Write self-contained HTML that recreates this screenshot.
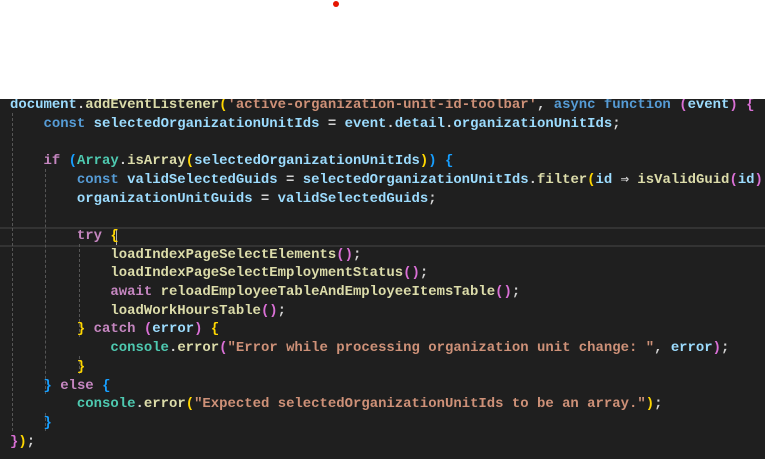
<!DOCTYPE html>
<html><head><style>
body{margin:0;width:765px;height:459px;background:#fff;overflow:hidden;position:relative}
.dot{position:absolute;left:333px;top:1px;width:6px;height:6px;border-radius:50%;background:#e51400}
.ed{position:absolute;left:0;top:99px;width:765px;height:360px;background:#1f1f1f;overflow:hidden}
pre{margin:0;position:absolute;left:10px;top:-3px;font-family:"Liberation Mono",monospace;font-size:13.95px;line-height:18.7px;font-weight:bold;color:#9cdcfe;white-space:pre}
.cur{position:absolute;left:0;top:128px;width:765px;height:16px;border-top:2px solid #333;border-bottom:2px solid #333}
.g{position:absolute;width:0;border-left:1px dashed #555}
.c{position:absolute;left:116px;top:130px;width:1px;height:16px;background:#aeafad}
.k{color:#569cd6}.p{color:#c586c0}.f{color:#dcdcaa}.s{color:#ce9178}.t{color:#4ec9b0}.o{color:#d4d4d4}
.b1{color:#ffd700}.b2{color:#da70d6}.b3{color:#179fff}
</style></head><body>
<div class="dot"></div>
<div class="ed">
<div class="cur"></div>
<div class="g" style="left:12px;top:14px;height:318px"></div>
<div class="g" style="left:45px;top:70px;height:225px"></div>
<div class="g" style="left:45px;top:314px;height:18px"></div>
<div class="g" style="left:79px;top:145px;height:93px"></div>
<div class="g" style="left:79px;top:257px;height:18px"></div>
<div class="c"></div>
<pre><span>document</span><span class="o">.</span><span class="f">addEventListener</span><span class="b1">(</span><span class="s">'active-organization-unit-id-toolbar'</span><span class="o">, </span><span class="k">async function</span> <span class="b2">(</span>event<span class="b2">)</span> <span class="b2">{</span>
    <span class="k">const</span> selectedOrganizationUnitIds <span class="o">=</span> event<span class="o">.</span>detail<span class="o">.</span>organizationUnitIds<span class="o">;</span>

    <span class="p">if</span> <span class="b3">(</span><span class="t">Array</span><span class="o">.</span><span class="f">isArray</span><span class="b1">(</span>selectedOrganizationUnitIds<span class="b1">)</span><span class="b3">)</span> <span class="b3">{</span>
        <span class="k">const</span> validSelectedGuids <span class="o">=</span> selectedOrganizationUnitIds<span class="o">.</span><span class="f">filter</span><span class="b1">(</span>id <span class="o">⇒</span> <span class="f">isValidGuid</span><span class="b2">(</span>id<span class="b2">)</span><span class="b1">)</span><span class="o">;</span>
        organizationUnitGuids <span class="o">=</span> validSelectedGuids<span class="o">;</span>

        <span class="p">try</span> <span class="b1">{</span>
            <span class="f">loadIndexPageSelectElements</span><span class="b2">()</span><span class="o">;</span>
            <span class="f">loadIndexPageSelectEmploymentStatus</span><span class="b2">()</span><span class="o">;</span>
            <span class="p">await</span> <span class="f">reloadEmployeeTableAndEmployeeItemsTable</span><span class="b2">()</span><span class="o">;</span>
            <span class="f">loadWorkHoursTable</span><span class="b2">()</span><span class="o">;</span>
        <span class="b1">}</span> <span class="p">catch</span> <span class="b2">(</span>error<span class="b2">)</span> <span class="b1">{</span>
            <span class="t">console</span><span class="o">.</span><span class="f">error</span><span class="b2">(</span><span class="s">"Error while processing organization unit change: "</span><span class="o">, </span>error<span class="b2">)</span><span class="o">;</span>
        <span class="b1">}</span>
    <span class="b3">}</span> <span class="p">else</span> <span class="b3">{</span>
        <span class="t">console</span><span class="o">.</span><span class="f">error</span><span class="b1">(</span><span class="s">"Expected selectedOrganizationUnitIds to be an array."</span><span class="b1">)</span><span class="o">;</span>
    <span class="b3">}</span>
<span class="b2">}</span><span class="b1">)</span><span class="o">;</span></pre>
</div>
</body></html>
